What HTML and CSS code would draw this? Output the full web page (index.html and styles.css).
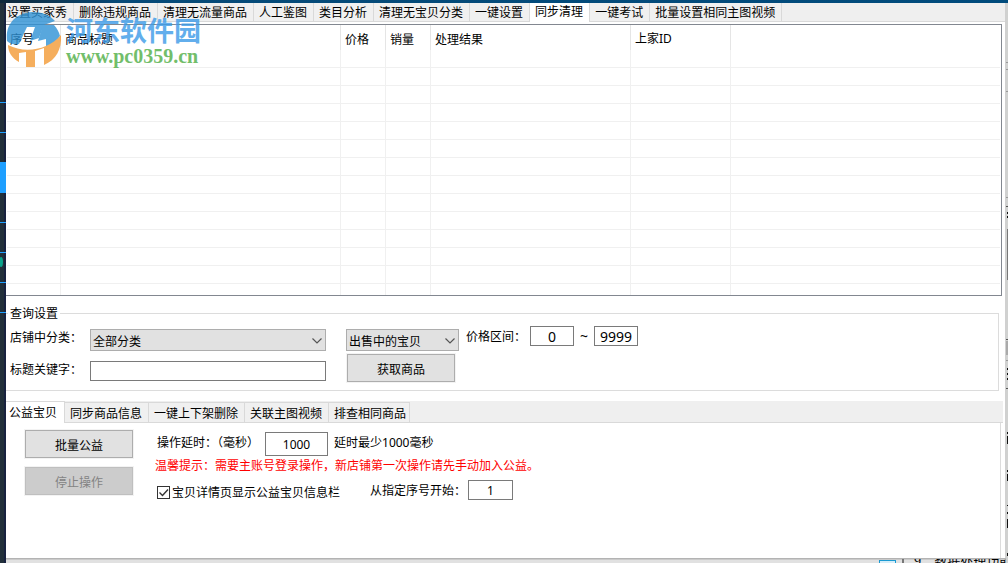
FILE: index.html
```html
<!DOCTYPE html>
<html lang="zh-CN">
<head>
<meta charset="utf-8">
<title>同步清理</title>
<link rel="stylesheet" href="styles.css">
</head>
<body>
<div class="desktop">
  <div class="top-edge"></div>
  <svg class="left-edge" width="6" height="560" aria-hidden="true">
    <rect width="6" height="560" fill="#22303a"/><rect x="4" width="2" height="560" fill="#18223f"/>
    <ellipse cx="1" cy="259" rx="2" ry="5" fill="#0aa38c"/>
    <path d="M0 99.500h6M0 129.500h6M0 219.500h6M0 249.500h6M0 279.500h6M0 309.500h6" stroke="#1e9fff"/>
    <rect y="159" width="6" height="31" fill="#1e9fff"/>
  </svg>
  <main class="window">
    <div class="tabs" role="tablist">
      <button class="tab first" role="tab">设置买家秀</button><button class="tab" role="tab">删除违规商品</button><button class="tab" role="tab">清理无流量商品</button><button class="tab" role="tab">人工鉴图</button><button class="tab" role="tab">类目分析</button><button class="tab" role="tab">清理无宝贝分类</button><button class="tab" role="tab">一键设置</button><button class="tab selected" role="tab" aria-selected="true">同步清理</button><button class="tab" role="tab">一键考试</button><button class="tab" role="tab">批量设置相同主图视频</button>
    </div>
    <div class="list">
      <table class="grid">
        <colgroup><col class="c-no"><col class="c-title"><col class="c-num"><col class="c-num"><col class="c-result"><col class="c-id"><col></colgroup>
        <thead><tr><th>序号</th><th>商品标题</th><th>价格</th><th>销量</th><th>处理结果</th><th>上家<span class="latin">ID</span></th><th></th></tr></thead>
        <tbody>
          <tr><td></td><td></td><td></td><td></td><td></td><td></td><td></td></tr>
          <tr><td></td><td></td><td></td><td></td><td></td><td></td><td></td></tr>
          <tr><td></td><td></td><td></td><td></td><td></td><td></td><td></td></tr>
          <tr><td></td><td></td><td></td><td></td><td></td><td></td><td></td></tr>
          <tr><td></td><td></td><td></td><td></td><td></td><td></td><td></td></tr>
          <tr><td></td><td></td><td></td><td></td><td></td><td></td><td></td></tr>
          <tr><td></td><td></td><td></td><td></td><td></td><td></td><td></td></tr>
          <tr><td></td><td></td><td></td><td></td><td></td><td></td><td></td></tr>
          <tr><td></td><td></td><td></td><td></td><td></td><td></td><td></td></tr>
          <tr><td></td><td></td><td></td><td></td><td></td><td></td><td></td></tr>
          <tr><td></td><td></td><td></td><td></td><td></td><td></td><td></td></tr>
          <tr><td></td><td></td><td></td><td></td><td></td><td></td><td></td></tr>
          <tr><td></td><td></td><td></td><td></td><td></td><td></td><td></td></tr>
          <tr><td></td><td></td><td></td><td></td><td></td><td></td><td></td></tr>
        </tbody>
      </table>
    </div>
    <fieldset class="query">
      <legend>查询设置</legend>
      <div class="query-row">
        <div class="fields">
          <label for="category">店铺中分类：</label>
          <span class="combo"><select id="category"><option>全部分类</option></select><svg class="arrow" width="10" height="6" aria-hidden="true"><path d="M.5.5 5 5 9.500.5" fill="none" stroke="#555" stroke-width="1.200"/></svg></span>
          <label for="keyword">标题关键字：</label>
          <input id="keyword" type="text">
        </div>
        <div class="source">
          <span class="combo"><select aria-label="宝贝状态"><option>出售中的宝贝</option></select><svg class="arrow" width="10" height="6" aria-hidden="true"><path d="M.5.5 5 5 9.500.5" fill="none" stroke="#555" stroke-width="1.200"/></svg></span>
          <button class="btn">获取商品</button>
        </div>
        <div class="price">
          <label for="low">价格区间：</label><input id="low" type="text" value="0"><span class="tilde">~</span><input type="text" value="9999" aria-label="最高价格">
        </div>
      </div>
    </fieldset>
    <div class="tabs lower" role="tablist">
      <button class="tab selected" role="tab" aria-selected="true">公益宝贝</button><button class="tab" role="tab">同步商品信息</button><button class="tab" role="tab">一键上下架删除</button><button class="tab" role="tab">关联主图视频</button><button class="tab last" role="tab">排查相同商品</button>
    </div>
    <section class="panel">
      <div class="actions"><button class="btn">批量公益</button><button class="btn" disabled>停止操作</button></div>
      <div class="options">
        <div class="delay"><label for="delay">操作延时：（毫秒）</label><input id="delay" type="text" value="1000"><span>延时最少<span class="latin">1000</span>毫秒</span></div>
        <p class="warning">温馨提示：需要主账号登录操作，新店铺第一次操作请先手动加入公益。</p>
        <div class="start">
          <label class="check"><span class="box"><input type="checkbox" checked><svg class="tick" width="13" height="13" aria-hidden="true"><path d="m2.500 6.500 3 3 5.500-6" fill="none" stroke="#333" stroke-width="1.400"/></svg></span>宝贝详情页显示公益宝贝信息栏</label>
          <label for="start">从指定序号开始：</label><input id="start" type="text" value="1">
        </div>
      </div>
    </section>
  </main>
  <svg class="right-edge" width="2" height="560" aria-hidden="true">
    <rect width="2" height="560" fill="#d0d1d0"/>
    <path d="M0 59.500h2M0 66.500h2M0 88.500h2M0 194.500h2M0 357.500h2" stroke="#999"/>
    <path d="M0 203.500h2M0 336.500h2M0 385.500h2" stroke="#555"/>
    <rect x="1" y="226" width="1" height="51" fill="#777"/><rect y="338" width="2" height="14" fill="#aaa"/>
    <path d="M1.500 209v2m0 2v2M1.500 365v2m0 3v2m0 3v2M1.500 429v2m0 2v8M1.500 467v2m0 2v7M1.500 502v1m0 6v2M1.500 516v9M1.500 550v3" stroke="#111"/>
  </svg>
  <div class="bottom-edge"><span class="blue-frame"></span><span class="divider"></span><span class="behind">9、数据处理功能</span></div>
  <div class="watermark">
    <svg width="56" height="56" viewBox="0 0 56 56" aria-hidden="true">
      <path d="M1 29C-1 12 10 1 26 0c10 0 18 3 23 9L38 13l-5 13-9 3 5-14h-8l-8 17C9 33 4 32 1 29Z" fill="#2f92d5"/>
      <path d="M37 13h11c3 3 5 7 6 11-3 5-8 9-14 12v-9l-8 2Z" fill="#2f92d5"/>
      <path d="M55 23c1 14-5 25-17 30V36l-9 3v16h-9V40l-7 1v9C6 46 2 40 2 33c17 9 40 5 53-10Z" fill="#f39a35"/>
    </svg>
    <div><div class="site">河东软件园</div><div class="url">www.pc0359.cn</div></div>
  </div>
</div>
</body>
</html>
```
FILE: styles.css
```css
* { box-sizing: border-box; }
body { margin: 0; font: 12px/16px "Noto Sans CJK SC", sans-serif; color: #000; }
button, input, select { font: inherit; color: inherit; margin: 0; border-radius: 0; }
.desktop { position: relative; display: grid; grid-template-columns: 6px minmax(0, 1fr) 2px; grid-template-rows: 3px minmax(0, 1fr) 5px; height: 100vh; overflow: hidden; }
.top-edge { grid-column: 1 / -1; background: linear-gradient(90deg, #10283a, #064a78 12%, #004b7c); }
.left-edge { grid-row: 2 / 4; grid-column: 1; }
.right-edge { grid-row: 2 / 4; grid-column: 3; }
.window { display: flex; flex-direction: column; min-height: 0; background: #fff; border-right: 1px solid #d0d0d0; }
.tabs { display: flex; height: 19px; background: #efefef; border-bottom: 1px solid #d9d9d9; flex: none; }
.tab { height: 18px; padding: 0 6px 0 5px; border: 0; border-right: 1px solid #d9d9d9; background: #f0f0f0; white-space: nowrap; line-height: 18px; }
.tab.first { padding-left: 1px; }
.tab.selected { height: 19px; background: #fff; line-height: 16px; padding-bottom: 3px; }
.list { margin: 2px 3px 0 0; height: 272px; padding: 0 1px; border: 1px solid #828790; border-left: 0; flex: none; overflow: hidden; }
.grid { width: 100%; table-layout: fixed; border-collapse: separate; border-spacing: 0; }
.c-no { width: 54px; }
.c-title { width: 280px; }
.c-num { width: 45px; }
.c-result { width: 200px; }
.c-id { width: 100px; }
.grid th { height: 25px; padding: 2px 4px 0; font-weight: 400; text-align: left; border-right: 1px solid #e5e5e5; }
.grid th:first-child { padding-left: 3px; }
.grid td { height: 18px; padding: 0; border-right: 1px solid #f0f0f0; border-bottom: 1px solid #f0f0f0; }
.grid th:last-child, .grid td:last-child { border-right: 0; }
.query { margin: 9px 6px 10px 0; padding: 0; border: 1px solid #dcdcdc; border-left: 0; height: 86px; min-width: 0; flex: none; }
.query legend { margin-left: 2px; padding: 0 2px; line-height: 16px; }
.query-row { display: flex; align-items: flex-start; padding: 8px 0 0 4px; }
.fields { display: grid; grid-template-columns: 80px 236px; row-gap: 10px; }
.fields input { height: 20px; }
.combo { position: relative; display: block; height: 22px; }
select { appearance: none; width: 100%; height: 22px; padding: 2px 2px 0; border: 1px solid #adadad; background: #e1e1e1; }
.arrow { position: absolute; right: 4px; top: 9px; pointer-events: none; }
input[type="text"] { border: 1px solid #7a7a7a; background: #fff; padding: 0 2px; outline: 0; }
.source { width: 113px; margin-left: 20px; display: grid; gap: 3px; }
.btn { width: 108px; height: 28px; padding: 2px 0 0; border: 1px solid #adadad; background: #e1e1e1; outline: 1px solid #f3f3f3; }
.btn:disabled { border-color: #bfbfbf; background: #ccc; color: #838383; }
.source .btn { margin-left: 1px; }
.price { display: flex; align-items: center; margin-left: 7px; margin-top: -3px; }
.price label { width: 64px; white-space: nowrap; }
.price input { width: 44px; height: 20px; text-align: center; font: 14px/16px "Noto Sans", sans-serif; }
.tilde { width: 20px; text-align: center; font: 14px/16px "Noto Sans", sans-serif; }
.lower { height: 22px; margin-right: 2px; align-items: flex-end; }
.lower .tab { border-top: 1px solid #d9d9d9; height: 20px; line-height: 19px; }
.lower .tab.selected { height: 22px; margin-bottom: -1px; border-top: 1px solid #d9d9d9; padding: 0 7px 2px 3px; }
.lower .tab.last { padding-right: 3px; }
.panel { display: flex; flex: 1; min-height: 0; margin-right: 4px; padding: 7px 0 0 19px; border-right: 1px solid #dcdcdc; }
.actions { display: flex; flex-direction: column; gap: 9px; }
.options { margin-left: 22px; }
.delay { display: flex; gap: 6px; padding-left: 2px; height: 26px; }
.delay label { width: 102px; line-height: 24px; white-space: nowrap; }
.delay > span { line-height: 24px; }
.delay input { width: 63px; height: 24px; margin-top: 2px; text-align: center; font: 12px/16px "Noto Sans", sans-serif; }
.latin { font-family: "Noto Sans", sans-serif; }
.warning { margin: 1px 0 0; color: #f00; }
.start { display: flex; align-items: center; margin-top: 7px; padding-left: 2px; }
.check { display: flex; align-items: center; gap: 2px; margin-right: 30px; padding-top: 4px; }
.box { position: relative; width: 13px; height: 13px; }
.box input { display: block; appearance: none; width: 13px; height: 13px; border: 1px solid #333; background: #fff; }
.tick { position: absolute; left: 0; top: 0; pointer-events: none; }
.start > input { width: 45px; height: 20px; margin-left: 2px; text-align: center; font: 12px/16px "Noto Sans", sans-serif; }
.bottom-edge { grid-row: 3; grid-column: 2; display: flex; justify-content: flex-end; overflow: hidden; border-top: 1px solid #b3b3b3; background: #e1e1e1; box-shadow: inset 0 1px #cacaca; }
.blue-frame { width: 17px; height: 6px; margin-top: 1px; border: 1px solid #1b9ad2; background: #d5edf8; }
.divider { width: 8px; margin-right: 10px; border-right: 2px solid #777; }
.behind { width: 92px; margin-top: -6px; white-space: nowrap; font-size: 13px; }
.watermark { position: absolute; left: 6px; top: 12px; display: flex; gap: 4px; opacity: .8; pointer-events: none; }
.site { margin-top: 4px; color: #3c9be8; font-size: 27px; line-height: 28px; font-weight: 700; }
.url { color: #4fae45; font: bold 20px/24px "Liberation Serif", serif; }
```
